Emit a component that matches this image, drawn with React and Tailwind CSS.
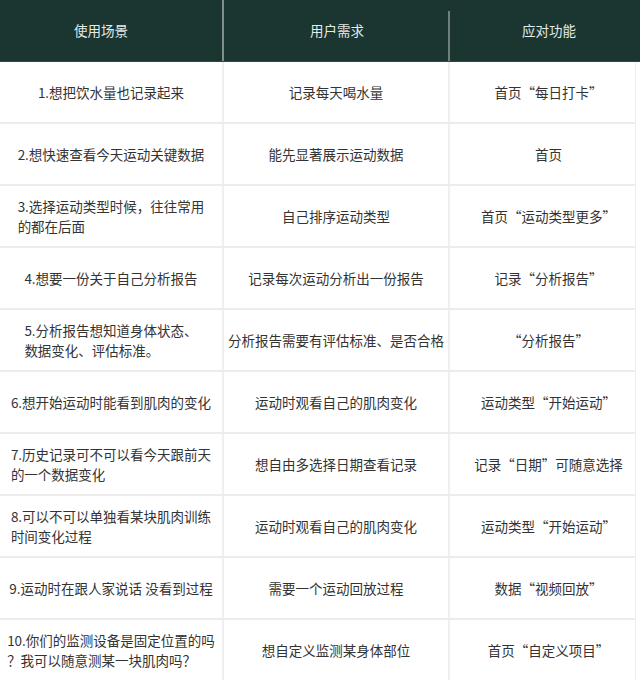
import React from 'react';

const rows = [
  { scene: ['1.想把饮水量也记录起来'], need: '记录每天喝水量', fn: '首页“每日打卡”' },
  { scene: ['2.想快速查看今天运动关键数据'], need: '能先显著展示运动数据', fn: '首页' },
  { scene: ['3.选择运动类型时候，往往常用', '的都在后面'], need: '自己排序运动类型', fn: '首页“运动类型更多”' },
  { scene: ['4.想要一份关于自己分析报告'], need: '记录每次运动分析出一份报告', fn: '记录“分析报告”' },
  { scene: ['5.分析报告想知道身体状态、', '数据变化、评估标准。'], need: '分析报告需要有评估标准、是否合格', fn: '“分析报告”' },
  { scene: ['6.想开始运动时能看到肌肉的变化'], need: '运动时观看自己的肌肉变化', fn: '运动类型“开始运动”' },
  { scene: ['7.历史记录可不可以看今天跟前天', '的一个数据变化'], need: '想自由多选择日期查看记录', fn: '记录“日期”可随意选择' },
  { scene: ['8.可以不可以单独看某块肌肉训练', '时间变化过程'], need: '运动时观看自己的肌肉变化', fn: '运动类型“开始运动”' },
  { scene: ['9.运动时在跟人家说话 没看到过程'], need: '需要一个运动回放过程', fn: '数据“视频回放”' },
  { scene: ['10.你们的监测设备是固定位置的吗', '？我可以随意测某一块肌肉吗？'], need: '想自定义监测某身体部位', fn: '首页“自定义项目”' },
];

export default function App() {
  return (
    <div
      className="w-[640px] h-[680px] overflow-hidden bg-white text-[13.5px] text-[#333333]"
      style={{ fontFamily: '"Noto Sans CJK SC", "Noto Sans", sans-serif' }}
    >
      {/* header */}
      <div className="flex h-[62px] bg-[#1b3530] border-b border-[#2c4a43] text-[#e4ebe8]">
        <div className="w-[224px] flex items-center justify-center pr-[20px] border-r-2 border-[#7f8f8a]">使用场景</div>
        <div className="w-[226px] flex items-center justify-center relative">
          用户需求
          <span className="absolute right-0 top-[11px] bottom-0 w-[2px] bg-[#6e807a]" />
        </div>
        <div className="flex-1 flex items-center justify-center pl-[8px]">应对功能</div>
      </div>

      {/* body */}
      <div className="w-[636px] border-r border-[#eeeeee]">
        {rows.map((r, i) => (
          <div key={i} className="flex h-[62px] border-b-2 border-[#ececec] leading-[20px]">
            <div className="w-[224px] flex items-center justify-center border-r-2 border-[#efefef]">
              <div className="text-left">
                {r.scene.map((l, j) => (
                  <div key={j} className="whitespace-nowrap">{l}</div>
                ))}
              </div>
            </div>
            <div className="w-[226px] flex items-center justify-center border-r-2 border-[#efefef] whitespace-nowrap">
              {r.need}
            </div>
            <div className="flex-1 flex items-center justify-center pl-[12px] whitespace-nowrap">{r.fn}</div>
          </div>
        ))}
      </div>
    </div>
  );
}
